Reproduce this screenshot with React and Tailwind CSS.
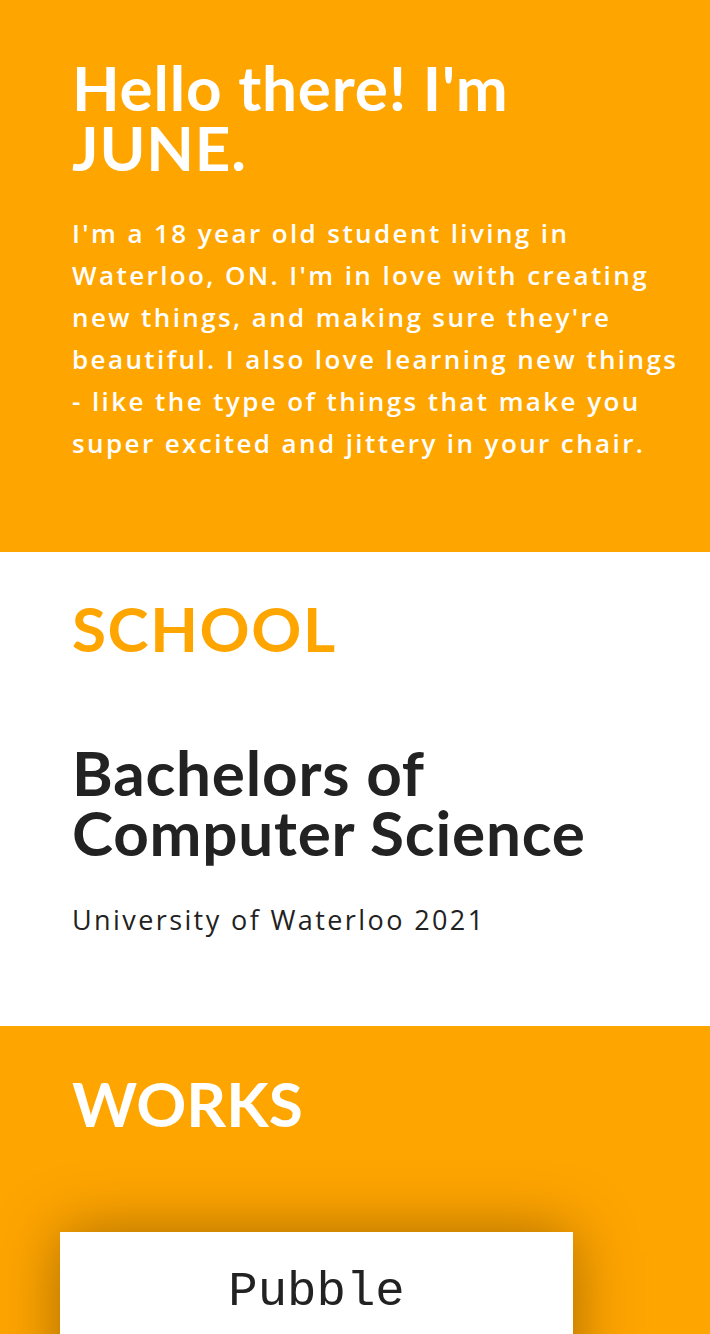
export default function App() {
  return (
    <div className="w-[710px] min-h-screen overflow-hidden">
      {/* Hero */}
      <section className="bg-[#ffa500] pl-[72px] pr-[28px] pt-[57px] pb-[88px]">
        <h1 className="font-['Lato',sans-serif] text-[62px] leading-[60px] tracking-[0.8px] font-bold text-white">
          Hello there! I'm
          <br />
          JUNE.
        </h1>
        <p className="mt-[35px] font-['Open_Sans',sans-serif] text-[26px] leading-[42px] tracking-[2.4px] font-semibold text-white">
          I'm a 18 year old student living in Waterloo, ON. I'm in love with creating new things, and making sure they're beautiful. I also love learning new things - like the type of things that make you super excited and jittery in your chair.
        </p>
      </section>

      {/* School */}
      <section className="bg-white pl-[72px] pr-[20px] pt-[46px] pb-[85px]">
        <h2 className="font-['Lato',sans-serif] text-[62px] leading-[60px] tracking-[1.6px] font-bold text-[#ffa500]">
          SCHOOL
        </h2>
        <h3 className="mt-[84px] font-['Lato',sans-serif] text-[62px] leading-[60px] tracking-[0.8px] font-bold text-[#222]">
          Bachelors of
          <br />
          Computer Science
        </h3>
        <p className="mt-[37px] font-['Open_Sans',sans-serif] text-[27px] leading-[42px] tracking-[2.4px] text-[#222]">
          University of Waterloo 2021
        </p>
      </section>

      {/* Works */}
      <section className="bg-[#ffa500] pt-[47px] pb-[40px]">
        <h2 className="pl-[72px] font-['Lato',sans-serif] text-[62px] leading-[60px] font-bold text-white">
          WORKS
        </h2>
        <div className="mt-[99px] ml-[60px] w-[513px] h-[200px] bg-white shadow-[0_0_60px_rgba(0,0,0,0.35)] flex justify-center pt-[30px]">
          <span className="font-['Liberation_Mono','Courier_New',monospace] text-[49px] leading-[60px] text-[#222]">
            Pubble
          </span>
        </div>
      </section>
    </div>
  );
}
